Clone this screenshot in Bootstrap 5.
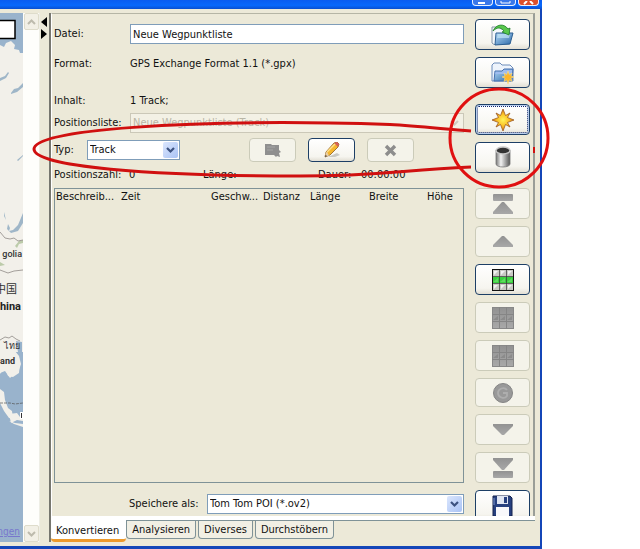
<!DOCTYPE html>
<html lang="de">
<head>
<meta charset="utf-8">
<meta name="viewport" content="width=device-width, initial-scale=1">
<title>Neue Wegpunktliste</title>
<link href="https://cdn.jsdelivr.net/npm/bootstrap@5.3.0/dist/css/bootstrap.min.css" rel="stylesheet">
<style>
:root { --face: #ece9d8; --line: #7f9297; --field: #7f9db9; --navy: #1d3f66; }
body { background: #fff; color: #111; font: 11px/16px "DejaVu Sans Condensed", "Noto Sans", sans-serif; padding-right: 98px; }
.app { background: var(--face); border-right: 2px solid #1446b8; border-bottom: 3px solid #1446b8; }
.titlebar { height: 9px; background: linear-gradient(#0a5cf0, #0868fb 60%, #0a4fd0); padding-right: 3px; gap: 2px; overflow: hidden; margin-right: -2px; }
.winbtn { width: 21px; height: 6px; padding: 0; border: 1px solid #e8f0ff; border-top: 0; border-radius: 0 0 4px 4px; background: #3a78ea; }
.winbtn svg { display: block; margin: auto; }
.winbtn.close-win { background: #dc4f2c; }
.mapview { width: 23px; background: #99b3cc; overflow: hidden; }
.mapview svg { display: block; }
.vscroll { width: 17px; background: #fefefb; border-right: 1px solid #eeeee5; }
.vscroll button { width: 15px; height: 17px; padding: 0; margin-left: 1px; border: 1px solid #dedccb; border-radius: 2px; background: #f2f0e6; display: flex; align-items: center; justify-content: center; }
.splitter { width: 9px; padding: 4px 1px 0; }
.splitter svg { display: block; margin-bottom: 2px; }
.panes { padding: 4px 5px 4px 0; min-height: 0; }
.tabpane-box { border-left: 2px solid #77776f; min-width: 0; }
.content-box { border-top: 1px solid #b5b5a5; border-right: 2px solid #9a9e98; border-left: 1px solid #fff; padding: 5px 3px 0 2px; gap: 11px; overflow: hidden; min-height: 0; }
.form-side { min-width: 0; padding-top: 5px; }
.line { display: grid; grid-template-columns: 76px 1fr; align-items: center; min-height: 20px; }
.fld, .combo select { width: 100%; height: 20px; border: 1px solid var(--field); border-radius: 0; background: #fff; color: #111; padding: 0 2px; font: inherit; appearance: none; outline: 0; }
.combo { position: relative; }
.combo svg { position: absolute; right: 2px; top: 2px; pointer-events: none; }
.combo select:disabled { background: #f3f1e5; border-color: #cbc8b8; color: #b9b6a6; opacity: 1; }
.tool { width: 55px; height: 31px; flex: none; padding: 0; border: 1px solid var(--navy); border-radius: 4px; background: linear-gradient(#fff, #f6f5ef 80%, #e2dfd4); display: flex; align-items: center; justify-content: center; }
.tool:disabled { border-color: #cbcbb9; background: #f4f3ea; }
.tool.short { width: 47px; height: 24px; }
.tool.flat { height: 29px; }
.tool.focused { box-shadow: inset 0 0 0 1px #b7cdee; outline: 1px dotted #112a70; outline-offset: -3px; }
.tool svg { display: block; }
.tools { gap: 7px; overflow: hidden; }
.positions { border: 1px solid var(--line); padding-left: 1px; }
.positions table { width: 100%; table-layout: fixed; border-collapse: collapse; }
.positions th { font-weight: 400; padding: 0; height: 16px; white-space: nowrap; }
.under { height: 5px; background: #fff; border-bottom: 1px solid var(--line); }
.tabs { gap: 2px; height: 21px; }
.tabs button { font: inherit; color: #111; height: 18px; padding: 0 5px; background: #f1efe4; border: 1px solid var(--line); border-top: 0; border-radius: 0 0 4px 4px; line-height: 16px; white-space: nowrap; }
.tabs button.active { height: 22px; background: #fff; border: 0; border-bottom: 3px solid #ec9a2c; padding: 3px 7px 0 5px; margin-right: -2px; margin-top: -1px; }
.marks { position: absolute; left: 0; top: 0; pointer-events: none; }
</style>
<script src="https://cdn.jsdelivr.net/npm/bootstrap@5.3.0/dist/js/bootstrap.bundle.min.js"></script>
</head>
<body>
<svg width="0" height="0" class="position-absolute" aria-hidden="true">
  <defs>
    <linearGradient id="gBlue" x2="1" y2="1"><stop stop-color="#b8dcf8"/><stop offset="1" stop-color="#2867a8"/></linearGradient>
    <linearGradient id="gCan"><stop stop-color="#777"/><stop offset=".35" stop-color="#f2f2f2"/><stop offset="1" stop-color="#555"/></linearGradient>
    <linearGradient id="gGray" x2="0" y2="1"><stop stop-color="#929292"/><stop offset="1" stop-color="#a8a8a8"/></linearGradient>
    <linearGradient id="gDrop" x2="1" y2="1"><stop stop-color="#dbe6fd"/><stop offset="1" stop-color="#a9c3f5"/></linearGradient>
    <radialGradient id="gStar"><stop stop-color="#fff45a"/><stop offset=".5" stop-color="#fbc42a"/><stop offset="1" stop-color="#e07a12"/></radialGradient>
    <symbol id="drop" viewBox="0 0 15 16"><rect width="15" height="16" rx="2" fill="url(#gDrop)"/><path d="M4 6l3.500 3.500L11 6" fill="none" stroke="#3c5280" stroke-width="2.200"/></symbol>
    <symbol id="grid" viewBox="0 0 22 22"><rect width="22" height="22" fill="#888"/><path d="M1 1h20v20H1z" fill="url(#gGray)"/><path d="M7.500 0v22M14.500 0v22M0 7.500h22M0 14.500h22" stroke="#858585"/><path d="M1 13l5-4v4zM8 13l5-4v4zM15 13l5-4v4z" fill="#8b8b8b"/></symbol>
  </defs>
</svg>

<div class="app d-flex flex-column vh-100 position-relative">
  <header class="titlebar d-flex justify-content-end flex-shrink-0">
    <button class="winbtn" aria-label="Minimieren"><svg width="15" height="4"><path d="M3 1h7v2H3z" fill="#fff"/></svg></button>
    <button class="winbtn" aria-label="Maximieren"><svg width="15" height="4"><path d="M3 0v2h9V0" fill="none" stroke="#fff"/></svg></button>
    <button class="winbtn close-win" aria-label="Schließen"><svg width="15" height="4"><path d="M3 3l3-3M12 3L9 0" stroke="#fff" stroke-width="2"/></svg></button>
  </header>

  <main class="panes d-flex flex-grow-1">
    <section class="mapview flex-shrink-0" aria-label="Karte">
      <svg width="23" height="528" viewBox="0 13 23 528" font-family="Roboto, 'Noto Sans CJK SC', sans-serif">
        <path fill="#f2f0ea" d="M0 45l4 2 2-4 5-2 4 4-1 4 5 1 1 3h3v345H0z"/>
        <path fill="#9fb6c8" d="M0 78l5-2 3-4 1 1-3 5-6 3zM11 93l3-4 4-1 5-5v4l-6 5-6 2zM4 212l2 8 4 8-1 3 4-1 5-5 5-12v10l-5 8-7 2-4-4 1-5-4-8zM17 160l6-5v1l-5 5z"/>
        <path fill="#bccbaa" d="M15 246l4-5 4-1v3l-4 1-2 4zM0 262l5 3-5 1z"/>
        <path fill="none" stroke="#8f8a86" stroke-width=".8" d="M0 232l5 6 5 1 4-1 4 3 5-1M0 270l8 3 6-2 9-1M0 340l5-3 4 1 3-2 4 3 4 2"/>
        <path fill="#99b3cc" d="M16 341l6 1v10h1v189H0V374l2-3 4-1 2 6 5 1 6-4 1-10-3-7-3-4h4z"/>
        <path fill="#f2f0ea" d="M0 351h15l4 5 2 8-2 6-6 5-3 3-5-7-5 2zM0 389l4 3 1 8 3 8 4 3 1 8-4-1-5-7-4-8zM9 414l8-1 3 4h3v4l-6-1-6 3zM9 421l6 2 8 1v3l-9-3z"/>
        <path fill="none" stroke="#555" stroke-width=".7" stroke-dasharray="3 1" d="M0 403h10l5 1 8-1"/>
        <rect x="-2" y="20.500" width="17" height="18" fill="#fff" stroke="#000" stroke-width="1.500"/>
        <g fill="#333" text-anchor="end">
          <text x="22" y="257" font-size="9" font-weight="500">golia</text>
          <text x="17" y="293" font-size="11">中国</text>
          <text x="21" y="310" font-size="11" font-weight="700" fill="#222">hina</text>
          <text x="20" y="349" font-size="9">ไทย</text>
          <text x="15" y="364" font-size="9" font-weight="700">and</text>
        </g>
        <path d="M20 412h3v7h-3z" fill="#fff"/><path d="M21.500 413v5" stroke="#333"/>
        <text x="20" y="535" font-size="10" text-anchor="end" fill="#7777cc" text-decoration="underline" font-family="DejaVu Sans Condensed, sans-serif">ngen</text>
      </svg>
    </section>
    <div class="vscroll d-flex flex-column justify-content-between flex-shrink-0">
      <button disabled aria-label="Nach oben"><svg width="9" height="6"><path d="M1 5l3.500-3.500L8 5" fill="none" stroke="#bdbbad" stroke-width="2"/></svg></button>
      <button disabled aria-label="Nach unten"><svg width="9" height="6"><path d="M1 1l3.500 3.500L8 1" fill="none" stroke="#bdbbad" stroke-width="2"/></svg></button>
    </div>
    <div class="splitter flex-shrink-0">
      <svg width="7" height="10"><path d="M6 0v10L0 5z"/></svg>
      <svg width="7" height="10"><path d="M0 0v10l6-5z"/></svg>
    </div>

    <section class="tabpane-box d-flex flex-column flex-grow-1">
      <div class="content-box d-flex flex-grow-1">
        <form class="form-side d-flex flex-column flex-grow-1">
          <div class="line"><label for="file">Datei:</label><input class="fld" id="file" type="text" value="Neue Wegpunktliste"></div>
          <div class="line" style="margin-top:10px"><span>Format:</span><span>GPS Exchange Format 1.1 (*.gpx)</span></div>
          <div class="line" style="margin-top:17px"><span>Inhalt:</span><span>1 Track;</span></div>
          <div class="line" style="margin-top:2px"><label for="list">Positionsliste:</label>
            <div class="combo"><select id="list" disabled><option>Neue Wegpunktliste (Track)</option></select>
              <svg width="15" height="16"><path d="M4 6l3.500 3.500L11 6" fill="none" stroke="#cfccc0" stroke-width="2"/></svg></div>
          </div>
          <div class="d-flex align-items-center" style="margin-top:5px">
            <label for="type" style="width:33px">Typ:</label>
            <div class="combo" style="width:93px"><select id="type"><option>Track</option><option>Route</option></select>
              <svg width="15" height="16"><use href="#drop"/></svg></div>
            <div class="d-flex flex-grow-1 justify-content-end" style="gap:12px;padding-right:50px">
              <button type="button" class="tool short" disabled aria-label="Neue Liste"><svg width="17" height="15"><path d="M1 1h6l1 1h7v5l2 2-2 1 1 4-3-1-1 1-2-2H1z" fill="#8f8f8f"/><path d="M3 4h8M3 7h6" stroke="#a5a5a5"/></svg></button>
              <button type="button" class="tool short" aria-label="Umbenennen"><svg width="18" height="17"><path d="M5 15l9-4 3 2-5 2z" fill="#c9c9c4"/><path d="M2 15l1-5 8-9 3-1 2 2-1 3-8 8z" fill="#f5b62c" stroke="#8a5a20" stroke-width=".8"/><path d="M11 1l3-1 2 2-1 3z" fill="#d4605a"/><path d="M4 10l8-8" stroke="#ffe08a" stroke-width="1.500"/><path d="M2 15l1-5 1.500.5.500 2 2 .5z" fill="#ead0a8"/><path d="M2 15l.5-2 1.500 1z" fill="#333"/></svg></button>
              <button type="button" class="tool short" disabled aria-label="Löschen"><svg width="13" height="13"><path d="M2 2l9 9M11 2l-9 9" stroke="#8d8d8d" stroke-width="3.400"/></svg></button>
            </div>
          </div>
          <div class="d-flex align-items-center" style="margin-top:3px;min-height:20px">
            <span style="width:75px">Positionszahl:</span><span style="width:74px">0</span><span style="width:115px">Länge:</span><span style="width:43px">Dauer:</span><span>00:00:00</span>
          </div>
          <div class="positions flex-grow-1" style="margin-top:3px">
            <table>
              <colgroup><col style="width:65px"><col style="width:90px"><col style="width:52px"><col style="width:47px"><col style="width:59px"><col style="width:58px"><col></colgroup>
              <thead><tr><th>Beschreib...</th><th>Zeit</th><th>Geschw...</th><th>Distanz</th><th>Länge</th><th>Breite</th><th>Höhe</th></tr></thead>
              <tbody></tbody>
            </table>
          </div>
          <div class="d-flex align-items-center" style="margin:11px 0 2px">
            <label for="saveas" style="width:78px;margin-left:75px">Speichere als:</label>
            <div class="combo flex-grow-1"><select id="saveas"><option>Tom Tom POI (*.ov2)</option></select>
              <svg width="15" height="16"><use href="#drop"/></svg></div>
          </div>
        </form>

        <div class="tools d-flex flex-column flex-shrink-0">
          <button class="tool" aria-label="Öffnen"><svg width="25" height="24"><path d="M2 4h8l1 2h8v15l-15 .5L2 20z" fill="#f3f7fb" stroke="#8796a8"/><path d="M6 10h17l-3 11-15 1z" fill="url(#gBlue)" stroke="#2c5f92"/><path d="M8 11h12l-1 4H7z" fill="#bfe2f5" opacity=".7"/><path d="M3 8C6 1 14 0 18 6l2-1-1 7-7-3 2-1C11 4 7 4 3 8z" fill="#58c84c" stroke="#1f7c2a" stroke-width=".8"/></svg></button>
          <button class="tool" aria-label="Neue Datei"><svg width="25" height="22"><path d="M2 3l2-2h6l2 2h8l3 3v13H2z" fill="#eef4fc" stroke="#6d8cba"/><path d="M5 9h7l2-2h9l-1 12H4z" fill="url(#gBlue)" stroke="#466fb0"/><path d="M6 10h6l2-2h8v4H5z" fill="#9fbcf0"/><path d="M18 9l1.300 3.700L22 11l-1 3 3 1-3 1 1 3.500-2.700-1.500L18 22l-1.300-4-2.700 1.500 1-3.500-3-1 3-1-1-3 2.700 1.700z" fill="#fbb62c" stroke="#fbe08a" stroke-width=".6"/></svg></button>
          <button class="tool focused" style="margin-top:9px" aria-label="Neue Position"><svg width="22" height="22"><path d="M11 0l2.500 6.500L18 4l-2.500 4.500L22 11l-6.500 2.500L18 18l-4.500-2.500L11 22l-2.500-6.500L4 18l2.500-4.500L0 11l6.500-2.500L4 4l4.500 2.500z" fill="url(#gStar)" stroke="#9a5b22" stroke-width=".8"/></svg></button>
          <button class="tool" aria-label="Position löschen"><svg width="18" height="23"><path d="M2 4v14c0 4 14 4 14 0V4z" fill="url(#gCan)" stroke="#777" stroke-width=".8"/><ellipse cx="9" cy="4.500" rx="7" ry="3.500" fill="#333" stroke="#c8c8c8" stroke-width="1.400"/></svg></button>
          <button class="tool" style="margin-top:8px" disabled aria-label="Ganz nach oben"><svg width="20" height="22"><rect y="1" width="20" height="7" rx="1" fill="url(#gGray)"/><path d="M9 9h2l9 10v2H0v-2z" fill="url(#gGray)"/></svg></button>
          <button class="tool" disabled aria-label="Nach oben"><svg width="20" height="12"><path d="M9 0h2l9 9v2H0V9z" fill="url(#gGray)"/></svg></button>
          <button class="tool" aria-label="Alle auswählen"><svg width="22" height="22"><rect x=".5" y=".5" width="21" height="21" fill="#c9c9c4" stroke="#111"/><path d="M1 8h20v6H1z" fill="#39cf3e"/><path d="M1 13l5-4v4zM8 13l5-4v4zM15 13l5-4v4z" fill="#5fdc60"/><path d="M2 2h4L2 6zM9 2h4L9 6zM16 2h4l-4 4zM2 16h4l-4 4zM9 16h4l-4 4zM16 16h4l-4 4z" fill="#f2f2f2"/><path d="M7.500 1v20M14.500 1v20M1 7.500h20M1 14.500h20" stroke="#333" stroke-width=".7"/></svg></button>
          <button class="tool" disabled aria-label="Koordinaten ergänzen"><svg width="22" height="22"><use href="#grid"/></svg></button>
          <button class="tool" disabled aria-label="Höhen ergänzen"><svg width="22" height="22"><use href="#grid"/></svg></button>
          <button class="tool flat" disabled aria-label="Kommentare ergänzen"><svg width="20" height="20"><circle cx="10" cy="10" r="9.500" fill="#999" stroke="#858585"/><path d="M14 7c-3-4-9-1-9 3s6 7 9 3v-3h-4" fill="none" stroke="#aeaeae" stroke-width="1.800"/></svg></button>
          <button class="tool" disabled aria-label="Nach unten"><svg width="20" height="12"><path d="M0 0h20v2l-9 9H9L0 2z" fill="url(#gGray)"/></svg></button>
          <button class="tool" disabled aria-label="Ganz nach unten"><svg width="20" height="22"><path d="M0 1h20v2l-9 10H9L0 3z" fill="url(#gGray)"/><rect y="14" width="20" height="7" rx="1" fill="url(#gGray)"/></svg></button>
          <button class="tool" aria-label="Speichern"><svg width="21" height="22"><path d="M1 1h17l2 2v18H1z" fill="#27407f" stroke="#14224e"/><path d="M5 1h11v8H5z" fill="#dfe5f2"/><path d="M12 2h3v6h-3z" fill="#27407f"/><path d="M4 12h13v9H4z" fill="#f8f8fb"/><path d="M2 3v7" stroke="#7f98d0"/></svg></button>
        </div>
      </div>
      <div class="under flex-shrink-0"></div>
      <nav class="tabs d-flex align-items-start flex-shrink-0">
        <button class="active">Konvertieren</button><button>Analysieren</button><button>Diverses</button><button>Durchstöbern</button>
      </nav>
    </section>
  </main>

  <svg class="marks" width="560" height="200" fill="none" stroke="#d01010" stroke-width="3" aria-hidden="true">
    <path d="M471 131C420 127 390 123 330 123C200 121 34 128 34 149C34 167 150 176 300 176C380 176 400 170 471 167"/>
    <ellipse cx="499" cy="138" rx="49" ry="49" stroke="#e01010"/>
    <path d="M534 147v6" stroke-width="2"/>
  </svg>
</div>
</body>
</html>
